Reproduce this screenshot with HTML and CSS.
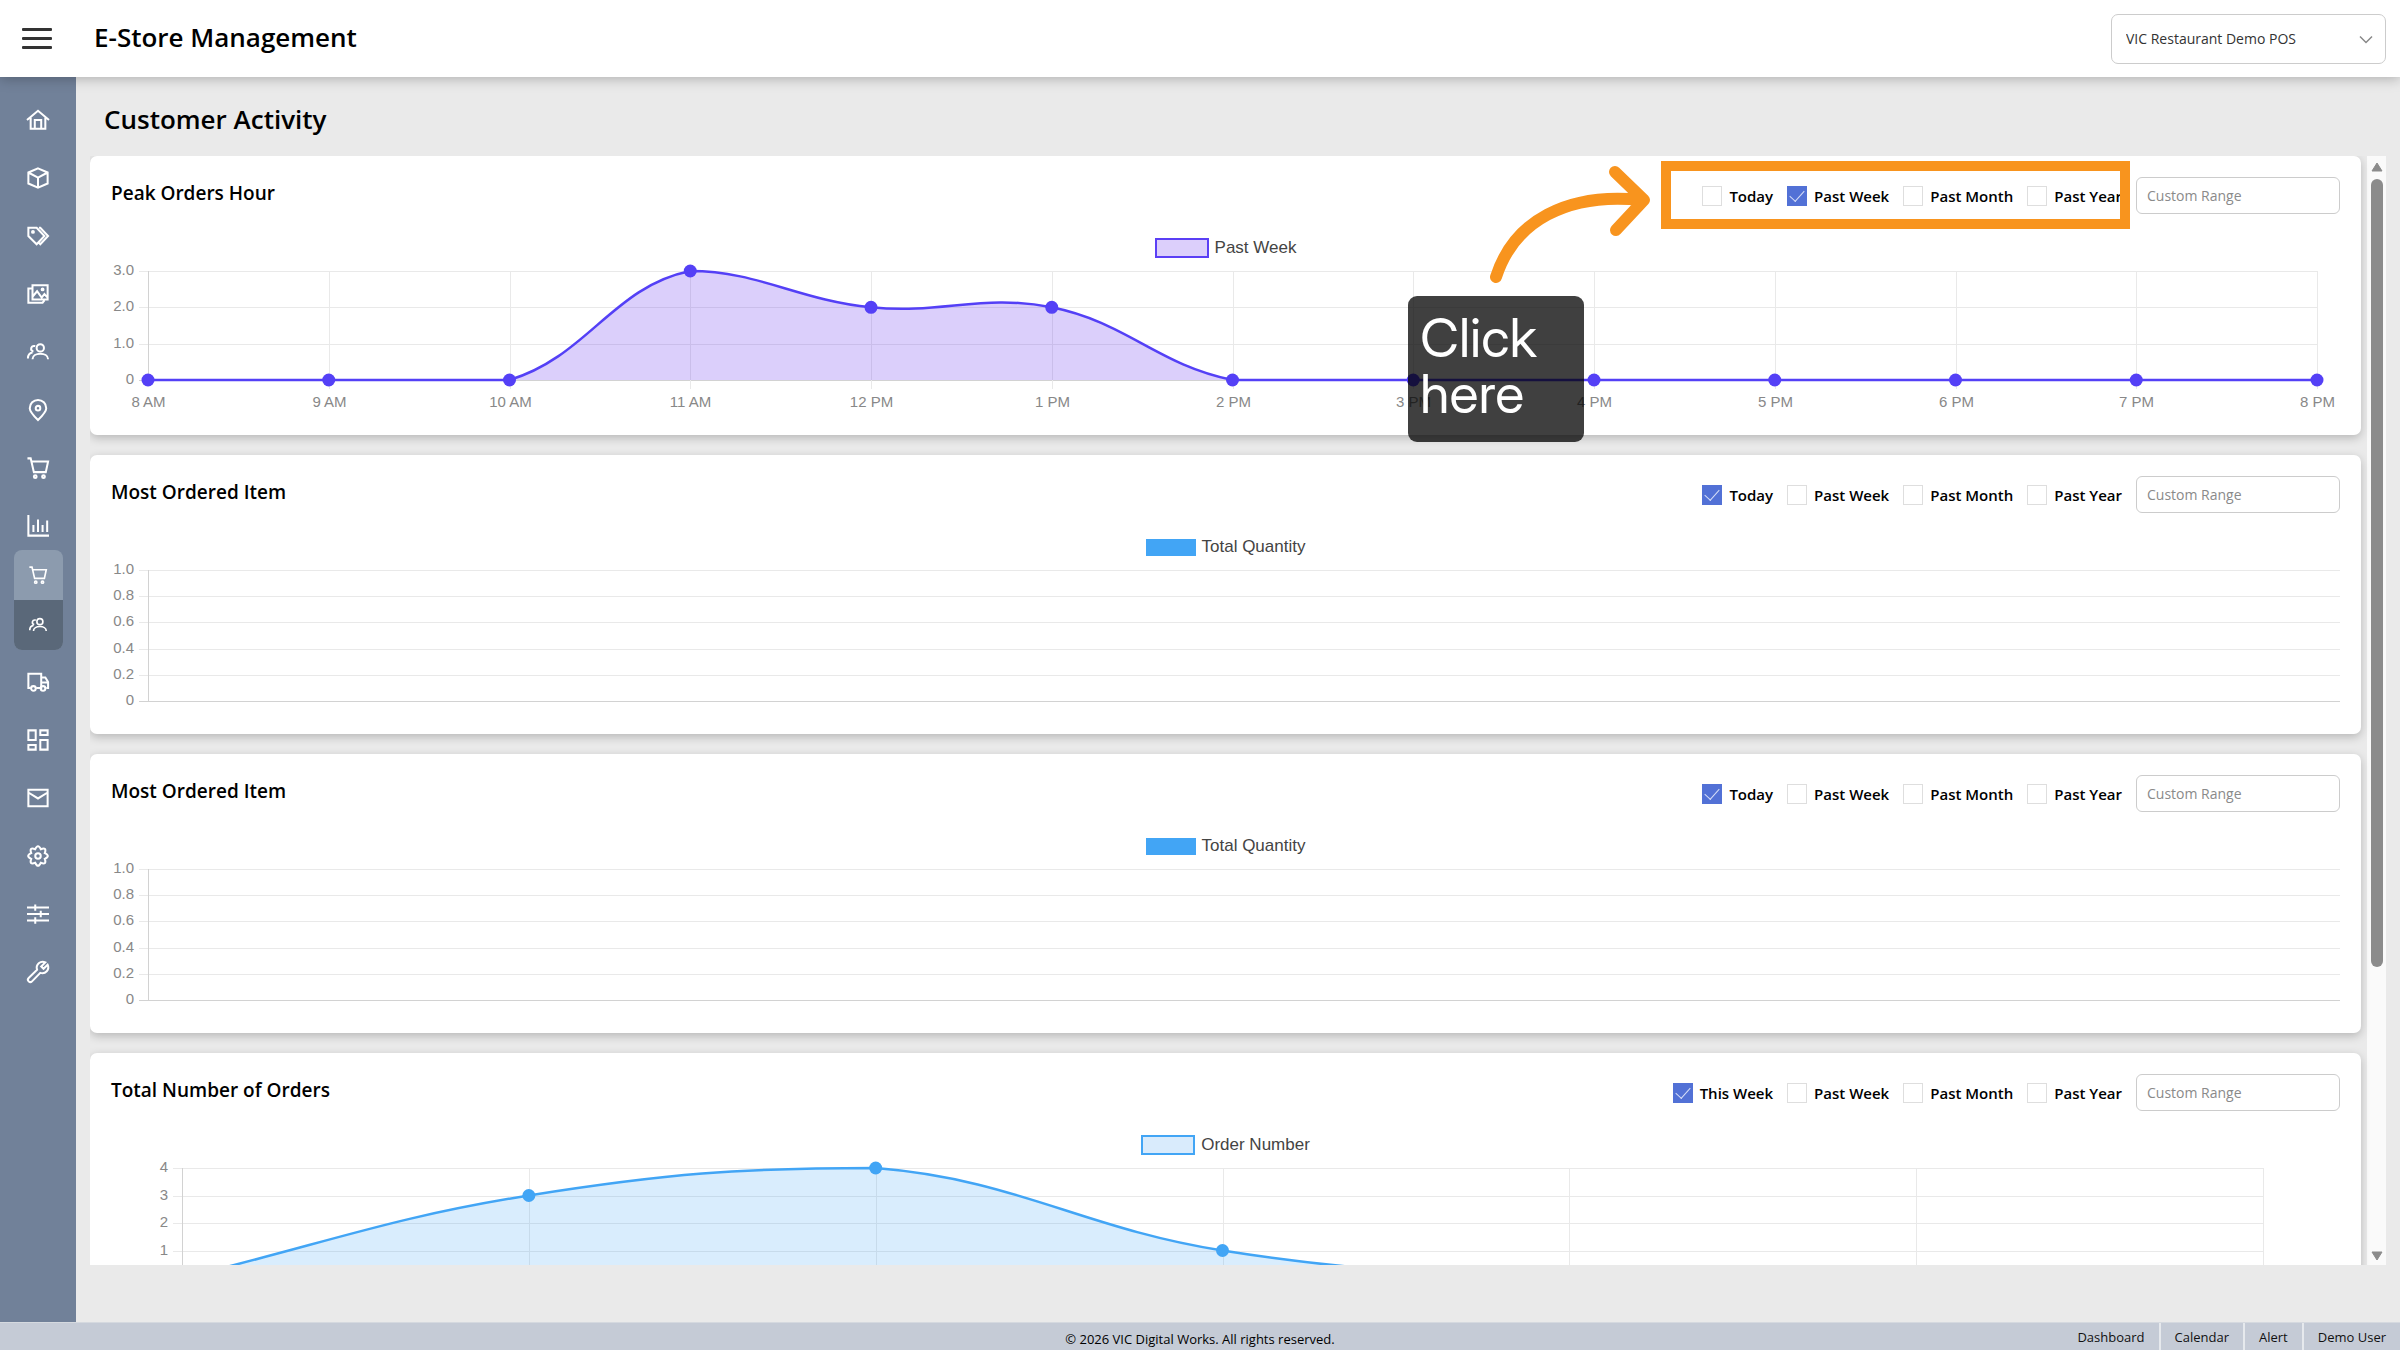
FILE: index.html
```html
<!DOCTYPE html>
<html lang="en">
  <head>
    <meta charset="UTF-8" />
    <meta name="viewport" content="width=device-width, initial-scale=1.0" />
    <title>E-Store Management</title>
    <link rel="stylesheet" href="styles.css">
  </head>
  <body>
    <header class="topbar">
      <button type="button" class="menu-btn" aria-label="Toggle menu">
        <span></span><span></span><span></span>
      </button>
      <h1>E-Store Management</h1>
      <div class="store-select">
        <select aria-label="Store">
          <option>VIC Restaurant Demo POS</option>
        </select>
        <svg width="14" height="9" viewBox="0 0 14 9"><path d="M1 1.5 7 7.5 13 1.5" /></svg>
      </div>
    </header>

    <div class="layout">
      <nav class="sidebar">
        <a href="#" aria-label="Home"><svg viewBox="0 0 24 24"><path d="M0 12 12 2l12 10M4 9.5v12h16v-12M8.5 21v-9h7v9" /></svg></a>
        <a href="#" aria-label="Products"><svg viewBox="0 0 24 24"><path d="M12 1.5 22.5 6v12L12 22.5 1.5 18V6zM1.5 6 12 11.5 22.500 6M12 11.5v11" /></svg></a>
        <a href="#" aria-label="Tags"><svg viewBox="0 0 24 24"><path d="M1.5 3h9l8.500 9-8.500 9L1.500 12zM13 3h1.500l8.500 9-8.500 9-1.500-1.500" /><circle cx="6.5" cy="7.5" r="1" /></svg></a>
        <a href="#" aria-label="Gallery"><svg viewBox="0 0 24 24"><path d="M6 2.5h16.5V18H6zM5 6H1.5v15.5H17l2-2.500M6 15l5-6 5 7 3-4 3.500 4" /><circle cx="17" cy="7" r="1" /></svg></a>
        <a href="#" aria-label="Customers"><svg viewBox="0 0 24 24"><circle cx="14.5" cy="7.5" r="4" /><path d="M6 20c0-8 17-8 17 0M9 5.5c-5-1-6 5-2 6M1 19c0-4 2-6 5-6.5" /></svg></a>
        <a href="#" aria-label="Locations"><svg viewBox="0 0 24 24"><path d="M12 23C7 18 3 14 3 10a9 9 0 0 1 18 0c0 4-4 8-9 13z" /><circle cx="12" cy="10" r="2.5" /></svg></a>
        <a href="#" aria-label="Orders"><svg viewBox="0 0 24 24"><path d="M.5 1.5H4l3.500 15h13L23 5H5" /><circle cx="9" cy="21.500" r="1.500" /><circle cx="18" cy="21.500" r="1.500" /></svg></a>
        <a href="#" aria-label="Reports"><svg viewBox="0 0 24 24"><path d="M1.5 0v22.5H24M7 11v7.5M12 5v13.5M17 11v7.5M22 6v12.5" /></svg></a>
        <div class="submenu">
          <a href="#" aria-label="Order reports"><svg viewBox="0 0 24 24"><path d="M.5 1.5H4l3.500 15h13L23 5H5" /><circle cx="9" cy="21.500" r="1.500" /><circle cx="18" cy="21.500" r="1.500" /></svg></a>
          <a href="#" class="active" aria-label="Customer activity"><svg viewBox="0 0 24 24"><circle cx="14.5" cy="7.5" r="4" /><path d="M6 20c0-8 17-8 17 0M9 5.5c-5-1-6 5-2 6M1 19c0-4 2-6 5-6.5" /></svg></a>
        </div>
        <a href="#" aria-label="Delivery"><svg viewBox="0 0 24 24"><path d="M4 18.5H1.5V3h14v15.500H10M15.5 7H20l3 5v6.500h-2M15.5 12.500h7" /><circle cx="7" cy="19" r="2.500" /><circle cx="17.500" cy="19" r="2.500" /></svg></a>
        <a href="#" aria-label="Dashboard"><svg viewBox="0 0 24 24"><path d="M1.5 1.5h8V12h-8zM14.5 1.5h8v5h-8zM1.5 17.5h8v5h-8zM14.5 12h8v10.500h-8z" /></svg></a>
        <a href="#" aria-label="Messages"><svg viewBox="0 0 24 24"><path d="M1.5 3h21v18h-21zM1.5 6 12 12.500 22.500 6" /></svg></a>
        <a href="#" aria-label="Settings"><svg viewBox="0 0 24 24"><path d="M19.4 8.900Q26 12 19.400 15.100Q21.900 21.900 15.100 19.400Q12 26 8.900 19.400Q2.100 21.900 4.600 15.100Q-2 12 4.600 8.900Q2.100 2.100 8.900 4.600Q12-2 15.100 4.600Q21.900 2.100 19.400 8.900z" /><circle cx="12" cy="12" r="3" /></svg></a>
        <a href="#" aria-label="Preferences"><svg viewBox="0 0 24 24"><path d="M0 5h24M0 12h24M0 19h24M9 1.5v7M15 8.5v7M9 15.5v7" /></svg></a>
        <a href="#" aria-label="Tools"><svg viewBox="0 0 24 24"><path d="M20 1.5a6.500 6.500 0 0 0-9 8L1.800 18.500a2.600 2.600 0 0 0 3.700 3.700L14.500 13a6.500 6.500 0 0 0 8-9L18 8.500 15.500 6z" /></svg></a>
      </nav>

      <main class="content">
        <h2>Customer Activity</h2>
        <div class="scroller">
          <div class="cards">
            <section class="card">
              <div class="card-head">
                <h3>Peak Orders Hour</h3>
                <form class="filters">
                  <label><input type="checkbox" /> Today</label>
                  <label><input type="checkbox" checked /> Past Week</label>
                  <label><input type="checkbox" /> Past Month</label>
                  <label><input type="checkbox" /> Past Year</label>
                  <input type="text" placeholder="Custom Range" aria-label="Custom Range" />
                </form>
              </div>
              <div class="legend"><span class="swatch purple"></span>Past Week</div>
              <svg class="chart" id="peakHours"></svg>

              <div class="highlight"></div>
              <svg class="arrow" width="164" height="130" viewBox="0 0 164 130">
                <path d="M8 120C26 64 79 35 154 43M127 15 156 43 128 73" />
              </svg>
              <div class="callout">Click here</div>
            </section>

            <section class="card">
              <div class="card-head">
                <h3>Most Ordered Item</h3>
                <form class="filters">
                  <label><input type="checkbox" checked /> Today</label>
                  <label><input type="checkbox" /> Past Week</label>
                  <label><input type="checkbox" /> Past Month</label>
                  <label><input type="checkbox" /> Past Year</label>
                  <input type="text" placeholder="Custom Range" aria-label="Custom Range" />
                </form>
              </div>
              <div class="legend"><span class="swatch solid"></span>Total Quantity</div>
              <svg class="chart" id="topItems"></svg>
            </section>

            <section class="card">
              <div class="card-head">
                <h3>Most Ordered Item</h3>
                <form class="filters">
                  <label><input type="checkbox" checked /> Today</label>
                  <label><input type="checkbox" /> Past Week</label>
                  <label><input type="checkbox" /> Past Month</label>
                  <label><input type="checkbox" /> Past Year</label>
                  <input type="text" placeholder="Custom Range" aria-label="Custom Range" />
                </form>
              </div>
              <div class="legend"><span class="swatch solid"></span>Total Quantity</div>
              <svg class="chart" id="topItems2"></svg>
            </section>

            <section class="card">
              <div class="card-head">
                <h3>Total Number of Orders</h3>
                <form class="filters">
                  <label><input type="checkbox" checked /> This Week</label>
                  <label><input type="checkbox" /> Past Week</label>
                  <label><input type="checkbox" /> Past Month</label>
                  <label><input type="checkbox" /> Past Year</label>
                  <input type="text" placeholder="Custom Range" aria-label="Custom Range" />
                </form>
              </div>
              <div class="legend"><span class="swatch blue"></span>Order Number</div>
              <svg class="chart" id="orderCount"></svg>
            </section>
          </div>
          <div class="scrollbar">
            <svg width="12" height="10" viewBox="0 0 12 10"><path d="M6 1 11 9H1z" /></svg>
            <div class="track"><div class="thumb"></div></div>
            <svg width="12" height="10" viewBox="0 0 12 10"><path d="M6 9 1 1H11z" /></svg>
          </div>
        </div>
      </main>
    </div>

    <footer class="footer">
      <p>© 2026 VIC Digital Works. All rights reserved.</p>
      <div class="footer-links">
        <a href="#">Dashboard</a>
        <a href="#">Calendar</a>
        <a href="#">Alert</a>
        <a href="#">Demo User</a>
      </div>
    </footer>
    <script src="charts.js"></script>
  </body>
</html>
```

FILE: styles.css
```css
* {
  box-sizing: border-box;
}

body {
  margin: 0;
  height: 100vh;
  display: flex;
  flex-direction: column;
  overflow: hidden;
  background: #eaeaea;
  color: #000;
  font-family: "Open Sans", "Noto Sans", sans-serif;
  font-size: 13px;
}

h1,
h2,
h3,
p {
  margin: 0;
  font-weight: 600;
}

h1,
h2 {
  font-size: 26px;
}

/* top bar */
.topbar {
  position: relative;
  z-index: 2;
  flex: none;
  height: 77px;
  display: flex;
  align-items: center;
  padding: 0 14px 0 22px;
  background: #fff;
  box-shadow: 0 2px 12px rgba(0, 0, 0, 0.25);
}

.topbar h1 {
  padding-bottom: 4px;
}

.menu-btn {
  width: 30px;
  margin-right: 42px;
  padding: 0;
  display: grid;
  gap: 6px;
  border: 0;
  background: none;
  cursor: pointer;
}

.menu-btn span {
  height: 3px;
  border-radius: 1px;
  background: #333;
}

.store-select {
  position: relative;
  width: 275px;
  margin-left: auto;
}

.store-select select {
  width: 100%;
  height: 50px;
  padding: 0 14px;
  appearance: none;
  border: 1px solid #ccc;
  border-radius: 7px;
  background: #fff;
  color: #333;
  font: 14px "Open Sans", "Noto Sans", sans-serif;
}

.store-select svg {
  position: absolute;
  top: 21px;
  right: 13px;
  fill: none;
  stroke: #888;
  stroke-width: 1.5;
}

.layout {
  flex: 1;
  min-height: 0;
  display: flex;
}

/* sidebar */
.sidebar {
  width: 76px;
  flex: none;
  display: flex;
  flex-direction: column;
  align-items: center;
  gap: 10px;
  padding-top: 19px;
  background: #718199;
}

.sidebar a {
  width: 49px;
  height: 48px;
  display: grid;
  place-items: center;
}

.sidebar svg {
  width: 22px;
  height: 22px;
  overflow: visible;
  fill: none;
  stroke: #fff;
  stroke-width: 2.2;
}

.submenu {
  margin: -10px 0 -2px;
  border-radius: 8px;
  overflow: hidden;
  background: #8c9bae;
}

.submenu a {
  height: 50px;
}

.submenu svg {
  width: 18px;
  height: 18px;
}

.submenu .active {
  background: #5a6879;
}

/* content */
.content {
  flex: 1;
  min-width: 0;
  display: flex;
  flex-direction: column;
  padding: 22px 14px 57px;
}

.content h2 {
  padding: 0 14px;
  margin-bottom: 17px;
  line-height: 40px;
}

.scroller {
  flex: 1;
  min-height: 0;
  display: flex;
  overflow: hidden;
}

.cards {
  flex: 1;
  min-width: 0;
  display: flex;
  flex-direction: column;
  gap: 20px;
  padding-right: 6px;
}

.card {
  position: relative;
  flex: none;
  height: 279px;
  padding: 21px 21px 0;
  border-radius: 7px;
  background: #fff;
  box-shadow: 0 3px 10px rgba(0, 0, 0, 0.22);
}

.card-head {
  display: flex;
  justify-content: space-between;
  align-items: flex-start;
}

.card h3 {
  font-size: 19px;
  line-height: 32px;
}

.filters {
  display: flex;
  align-items: center;
  gap: 14px;
}

.filters label {
  display: flex;
  align-items: center;
  gap: 7px;
  font-size: 15px;
  font-weight: 600;
}

.filters input[type="checkbox"] {
  width: 20px;
  height: 20px;
  margin: 0;
  display: grid;
  justify-content: center;
  appearance: none;
  border: 1px solid #dedede;
  background: #fff;
}

.filters input[type="checkbox"]:checked {
  border-color: #5271d6;
  background: #5271d6;
}

.filters input[type="checkbox"]:checked::after {
  content: "";
  width: 7px;
  height: 13px;
  border: solid #d5ddf7;
  border-width: 0 1px 1px 0;
  transform: rotate(42deg);
}

.filters input[type="text"] {
  width: 204px;
  height: 37px;
  padding: 0 10px;
  border: 1px solid #ccc;
  border-radius: 6px;
  font: 14px "Open Sans", "Noto Sans", sans-serif;
}

.filters input::placeholder {
  color: #8a8a8a;
}

.legend {
  display: flex;
  justify-content: center;
  align-items: center;
  gap: 6px;
  height: 20px;
  margin-top: 24px;
  color: #444;
  font: 17px "Liberation Sans", Arial, sans-serif;
}

.swatch {
  width: 54px;
  height: 20px;
  border: 2px solid;
}

.swatch.purple {
  border-color: #5b3ff5;
  background: #dccffb;
}

.swatch.blue {
  border-color: #42a5f5;
  background: #d9ebfc;
}

.swatch.solid {
  width: 50px;
  height: 17px;
  border: 0;
  background: #42a5f5;
}

.chart {
  display: block;
  width: 100%;
  height: 176px;
  overflow: visible;
  font: 15px "Liberation Sans", Arial, sans-serif;
}

.chart text {
  fill: #888;
}

.chart .grid {
  stroke: #e9e9e9;
}

.chart .axis {
  stroke: #d2d2d2;
}

/* hint drawn over the first card */
.highlight,
.arrow,
.callout {
  position: absolute;
  z-index: 1;
  pointer-events: none;
}

.highlight {
  top: 5px;
  right: 231px;
  width: 469px;
  height: 68px;
  border: 10px solid #f8941e;
}

.arrow {
  top: 1px;
  right: 709px;
  fill: none;
  stroke: #f8941e;
  stroke-width: 12;
  stroke-linecap: round;
  stroke-linejoin: round;
}

.callout {
  top: 140px;
  right: 777px;
  width: 176px;
  height: 146px;
  padding: 14px 12px;
  border-radius: 9px;
  background: rgba(0, 0, 0, 0.75);
  color: #fff;
  font: 54px/56px "Inter Display", Inter, sans-serif;
}

/* scrollbar */
.scrollbar {
  width: 19px;
  display: flex;
  flex-direction: column;
  align-items: center;
  padding: 6px 0 4px;
  background: #fafafa;
}

.scrollbar svg {
  flex: none;
  fill: #8b8b8b;
  stroke: #8b8b8b;
  stroke-linejoin: round;
}

.track {
  flex: 1;
  width: 12px;
  padding: 7px 0;
}

.thumb {
  height: 74%;
  border-radius: 6px;
  background: #8b8b8b;
}

/* footer */
.footer {
  flex: none;
  height: 28px;
  display: grid;
  grid-template-columns: 1fr auto 1fr;
  border-top: 1px solid #d5d9df;
  background: #c5cbd6;
  line-height: 32px;
}

.footer p {
  grid-column: 2;
  font-weight: 400;
}

.footer-links {
  display: flex;
  justify-content: flex-end;
  line-height: 28px;
}

.footer-links a {
  padding: 0 14px;
  color: #111;
  text-decoration: none;
}

.footer-links a + a {
  border-left: 2px solid #e6e9ed;
}
```

FILE: charts.js
```js
const quantityTicks = ["1.0", "0.8", "0.6", "0.4", "0.2", "0"];

const charts = {
  peakHours: {
    ticks: ["3.0", "2.0", "1.0", "0"],
    labels: ["8 AM", "9 AM", "10 AM", "11 AM", "12 PM", "1 PM", "2 PM", "3 PM", "4 PM", "5 PM", "6 PM", "7 PM", "8 PM"],
    data: [0, 0, 0, 3, 2, 2, 0, 0, 0, 0, 0, 0, 0],
    max: 3, left: 37, right: 23, height: 109,
    color: "#5440f6", fill: "rgba(112, 64, 240, 0.25)",
  },
  topItems: { ticks: quantityTicks, labels: [], data: [], left: 37, right: 0, height: 131 },
  topItems2: { ticks: quantityTicks, labels: [], data: [], left: 37, right: 0, height: 131 },
  orderCount: {
    ticks: ["4", "3", "2", "1", ""],
    labels: ["", "", "", "", "", "", ""],
    data: [0, 3, 4, 1, 0, 0, 0],
    max: 4, left: 71, right: 77, height: 110,
    color: "#42a5f5", fill: "rgba(66, 165, 245, 0.2)",
  },
};

const TOP = 13;

// smooth line through the points, control points kept inside the plot
function curve(points, top, bottom) {
  const clamp = (y) => Math.min(bottom, Math.max(top, y));
  const controls = points.map((p, i) => {
    const prev = points[i - 1] || p;
    const next = points[i + 1] || p;
    const d1 = Math.hypot(p.x - prev.x, p.y - prev.y);
    const d2 = Math.hypot(next.x - p.x, next.y - p.y);
    const a = (0.4 * d1) / (d1 + d2);
    const b = (0.4 * d2) / (d1 + d2);
    return {
      inX: p.x - a * (next.x - prev.x), inY: clamp(p.y - a * (next.y - prev.y)),
      outX: p.x + b * (next.x - prev.x), outY: clamp(p.y + b * (next.y - prev.y)),
    };
  });
  let d = `M${points[0].x} ${points[0].y}`;
  for (let i = 1; i < points.length; i++) {
    const c = controls[i - 1];
    const n = controls[i];
    d += `C${c.outX} ${c.outY} ${n.inX} ${n.inY} ${points[i].x} ${points[i].y}`;
  }
  return d;
}

function draw(id) {
  const c = charts[id];
  const svg = document.getElementById(id);
  const right = svg.clientWidth - c.right;
  const bottom = TOP + c.height;
  const line = (x1, y1, x2, y2, cls) => `<line class="${cls}" x1="${x1}" y1="${y1}" x2="${x2}" y2="${y2}" />`;
  let out = "";

  c.ticks.forEach((t, i) => {
    const y = Math.round(TOP + (c.height * i) / (c.ticks.length - 1)) + 0.5;
    const last = i === c.ticks.length - 1;
    out += line(c.left - 9, y, right, y, last ? "axis" : "grid");
    if (t) out += `<text x="${c.left - 14}" y="${y + 3}" text-anchor="end">${t}</text>`;
  });

  const step = (right - c.left) / (c.labels.length - 1);
  c.labels.forEach((t, i) => {
    const x = Math.round(c.left + step * i) + 0.5;
    if (i > 0) out += line(x, TOP, x, bottom + 9, "grid");
    if (t) out += `<text x="${x}" y="${bottom + 27}" text-anchor="middle">${t}</text>`;
  });
  out += line(c.left + 0.5, TOP, c.left + 0.5, bottom, "axis");

  if (c.data.length) {
    const points = c.data.map((v, i) => ({ x: c.left + step * i, y: bottom - (v / c.max) * c.height }));
    const d = curve(points, TOP, bottom);
    out += `<path d="${d}L${right} ${bottom}L${c.left} ${bottom}Z" fill="${c.fill}" />`;
    out += `<path d="${d}" fill="none" stroke="${c.color}" stroke-width="2.5" />`;
    points.forEach((p) => {
      out += `<circle cx="${p.x}" cy="${p.y}" r="6.5" fill="${c.color}" />`;
    });
  }
  svg.innerHTML = out;
}

function drawAll() {
  Object.keys(charts).forEach(draw);
}

drawAll();
window.addEventListener("resize", drawAll);
```
